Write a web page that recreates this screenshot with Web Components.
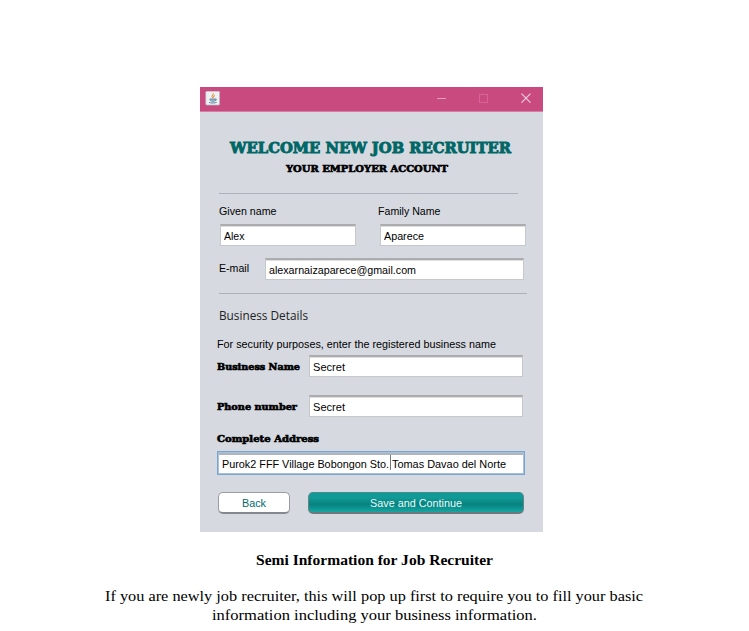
<!DOCTYPE html>
<html lang="en">
<head>
<meta charset="utf-8">
<title>Job Recruiter</title>
<style>
body{margin:0;background:#fff;color:#000;font-family:"Liberation Sans",Arial,sans-serif}
</style>
</head>
<body>
<recruiter-page></recruiter-page>
<script>
class UiText extends HTMLElement {
  connectedCallback() {
    if (this.shadowRoot) return;
    const root = this.attachShadow({mode: 'open'});
    root.innerHTML = `<style>
      :host{display:block;flex:none;white-space:nowrap;font-size:11.4px;line-height:16px;height:16px}
      span{display:inline-block;transform-origin:0 50%}
      :host([kind=title]) span,:host([kind=slab]) span{font-family:"DejaVu Serif",serif;font-weight:bold;-webkit-text-stroke:.65px currentColor}
      :host([kind=title]){color:#006766;font-size:14.2px}
      :host([kind=title]) span{-webkit-text-stroke-width:.9px}
      :host([kind=slab]){font-size:9.6px}
      :host([kind=section]){font:12.5px/16px "Open Sans","Noto Sans",sans-serif;color:#222}
      :host([kind=caption]){font:bold 15.5px/19px "Liberation Serif",serif;height:19px}
      :host([kind=body]){font:15.6px/19px "Liberation Serif",serif;height:19px}
    </style><span><slot></slot></span>`;
    const w = +this.getAttribute('w');
    this.style.width = w + 'px';
    const span = root.querySelector('span');
    const natural = span.getBoundingClientRect().width;
    if (natural) span.style.transform = `scaleX(${w / natural})`;
  }
}
customElements.define('ui-text', UiText);

class UiField extends HTMLElement {
  connectedCallback() {
    if (this.shadowRoot) return;
    this.attachShadow({mode: 'open'}).innerHTML = `<style>
      :host{display:flex;flex:none;box-sizing:border-box;align-items:center;height:22px;padding:1px 0 0 3px;background:#fff;
        border:1px solid #c6c8cc;border-top:2px solid #aaacae;box-shadow:inset 0 1px 0 #dedede}
      :host([focused]){height:24px;padding-left:4px;border:1px solid #79a5cf;outline:1px solid #a4c1df;outline-offset:-2px;box-shadow:inset 0 3px 0 #b2b5b8}
    </style><slot></slot>`;
  }
}
customElements.define('ui-field', UiField);

class TextCaret extends HTMLElement {
  connectedCallback() {
    if (this.shadowRoot) return;
    this.attachShadow({mode: 'open'}).innerHTML = `<style>:host{display:block;width:1px;height:15px;background:#777;margin:-2px 1px 0 1px}</style>`;
  }
}
customElements.define('text-caret', TextCaret);

class UiRule extends HTMLElement {
  connectedCallback() {
    if (this.shadowRoot) return;
    this.attachShadow({mode: 'open'}).innerHTML = `<style>:host{display:block;height:1px;background:#aeb1b9}</style>`;
  }
}
customElements.define('ui-rule', UiRule);

class UiButton extends HTMLElement {
  connectedCallback() {
    if (this.shadowRoot) return;
    this.attachShadow({mode: 'open'}).innerHTML = `<style>
      :host{display:flex;box-sizing:border-box;height:22px;align-items:center;justify-content:center;border:1px solid #999da3;border-bottom:2px solid #85898f;border-radius:5px;background:#fff;color:#00696b;padding-top:1px}
      :host([primary]){color:#e9fafa;background:linear-gradient(#0c9a98 0,#119a98 25%,#07837f 58%,#0a8d8a 72%,#16a7a2);border-color:#4c8b8c #658285 #6f777c}
    </style><slot></slot>`;
  }
}
customElements.define('ui-button', UiButton);

class TitleBar extends HTMLElement {
  connectedCallback() {
    if (this.shadowRoot) return;
    this.attachShadow({mode: 'open'}).innerHTML = `<style>
      :host{display:flex;box-sizing:border-box;height:25px;background:#c84a7f;border-bottom:1px solid #d47fa5;padding:4px 11px 0 5px}
      svg{display:block;flex:none}.controls{margin-left:auto}
    </style>
    <svg width="16" height="16" viewBox="0 0 16 16" fill="none">
      <rect x=".8" y=".3" width="13.7" height="13.7" rx="1" fill="#eef0f2" stroke="#b6bfc5" stroke-width=".7"/>
      <path d="M8.3 2.2c.8 1.4-2.2 2.3-1.1 4.1.3.6.8.9.8 1.5M10 4.4c-1.3.6-2 1.3-1.2 2.1" stroke="#e39a59" stroke-width="1.1"/>
      <path d="M4.8 8h5.4v1.5c0 1-4.6 1-4.8 0zM10.2 8c2-.3 1.5 1.5-.2 1.6M4 11.4c1.8 1 5.8.8 7.8-.1" fill="#a9bfd0" stroke="#5f87a5" stroke-width=".9"/>
    </svg>
    <svg class="controls" width="96" height="16" viewBox="0 0 96 16" fill="none">
      <path d="M1 7.5h9" stroke="#e39cbd"/>
      <rect x="43.5" y="3.5" width="8" height="8" stroke="#d76396"/>
      <path d="M85.5 2.7l9 9M94.5 2.7l-9 9" stroke="#f3cfdf" stroke-width="1.15"/>
    </svg>`;
  }
}
customElements.define('title-bar', TitleBar);

class RecruiterWindow extends HTMLElement {
  connectedCallback() {
    if (this.shadowRoot) return;
    this.attachShadow({mode: 'open'}).innerHTML = `<style>
      :host{display:block;width:343px;height:445px;background:#d6d9e0}
      .form{display:flex;flex-direction:column;align-items:flex-start;padding:28px 16px 0 17px}
      .row{display:flex;align-items:center}
    </style>
    <title-bar></title-bar>
    <div class="form">
      <ui-text kind="title" w="281" style="margin-left:13px">WELCOME NEW JOB RECRUITER</ui-text>
      <ui-text kind="slab" w="162" style="margin:5px 0 0 69px">YOUR EMPLOYER ACCOUNT</ui-text>
      <ui-rule style="width:299px;margin:16px 0 0 2px"></ui-rule>
      <div class="row" style="margin:9px 0 0 2px;gap:101px"><ui-text w="57.5">Given name</ui-text><ui-text w="62.5">Family Name</ui-text></div>
      <div class="row" style="margin:5px 0 0 3px;gap:24px"><ui-field style="width:136px"><ui-text w="20.5">Alex</ui-text></ui-field><ui-field style="width:146px"><ui-text w="40">Aparece</ui-text></ui-field></div>
      <div class="row" style="margin:12px 0 0 2px;gap:16px"><ui-text w="30" style="margin-top:-2px">E-mail</ui-text><ui-field style="width:259px"><ui-text w="147">alexarnaizaparece@gmail.com</ui-text></ui-field></div>
      <ui-rule style="width:308px;margin:13px 0 0 2px"></ui-rule>
      <ui-text kind="section" w="89" style="margin:14px 0 0 2px">Business Details</ui-text>
      <ui-text w="279" style="margin-top:12px">For security purposes, enter the registered business name</ui-text>
      <div class="row" style="margin-top:3px"><ui-text kind="slab" w="83" style="margin:2px 9px 0 0">Business Name</ui-text><ui-field style="width:214px"><ui-text w="32">Secret</ui-text></ui-field></div>
      <div class="row" style="margin-top:18px"><ui-text kind="slab" w="80" style="margin:2px 12px 0 0">Phone number</ui-text><ui-field style="width:214px"><ui-text w="32">Secret</ui-text></ui-field></div>
      <ui-text kind="slab" w="102" style="margin-top:14px">Complete Address</ui-text>
      <ui-field focused style="width:308px;margin-top:4px"><ui-text w="167">Purok2 FFF Village Bobongon Sto.</ui-text><text-caret></text-caret><ui-text w="114">Tomas Davao del Norte</ui-text></ui-field>
      <div class="row" style="margin:17px 0 0 1px;gap:18px"><ui-button style="width:72px"><ui-text w="24">Back</ui-text></ui-button><ui-button primary style="width:216px"><ui-text w="92">Save and Continue</ui-text></ui-button></div>
    </div>`;
  }
}
customElements.define('recruiter-window', RecruiterWindow);

class RecruiterPage extends HTMLElement {
  connectedCallback() {
    if (this.shadowRoot) return;
    this.attachShadow({mode: 'open'}).innerHTML = `<style>
      :host{display:flex;flex-direction:column;box-sizing:border-box;width:749px;height:631px;padding-top:87px;overflow:hidden;align-items:flex-start}
      recruiter-window{margin-left:200px}
    </style>
    <recruiter-window></recruiter-window>
    <ui-text kind="caption" w="237" style="margin:18px 0 0 256px">Semi Information for Job Recruiter</ui-text>
    <ui-text kind="body" w="538" style="margin:17px 0 0 105px">If you are newly job recruiter, this will pop up first to require you to fill your basic</ui-text>
    <ui-text kind="body" w="325" style="margin-left:212px">information including your business information.</ui-text>`;
  }
}
customElements.define('recruiter-page', RecruiterPage);
</script>
</body>
</html>
